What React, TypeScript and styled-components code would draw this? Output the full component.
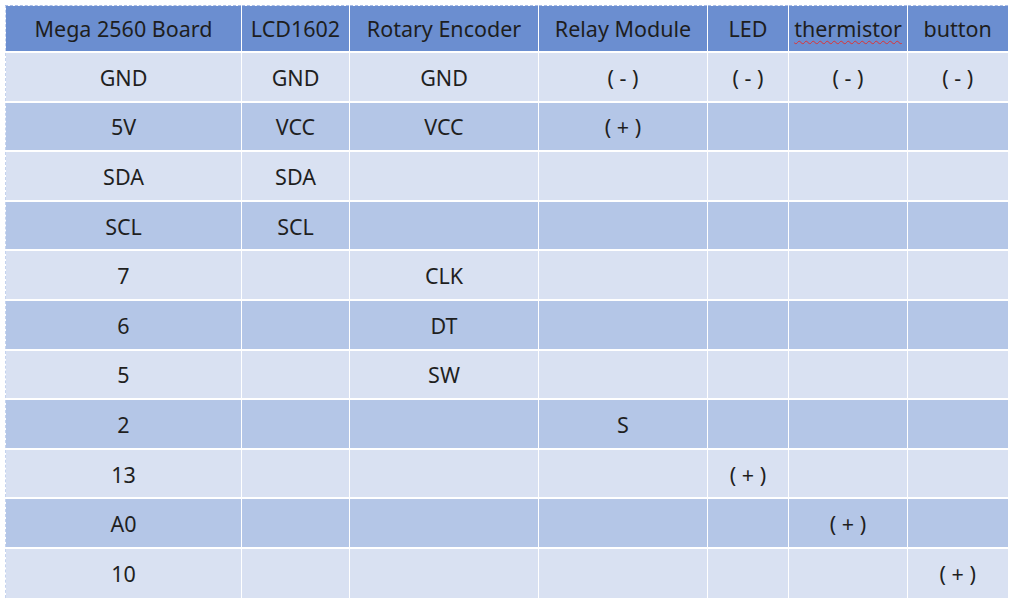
import styled, { createGlobalStyle } from 'styled-components';

const GlobalStyle = createGlobalStyle`
  html, body {
    margin: 0;
    padding: 0;
    background: #ffffff;
  }
`;

const columns = [
  { title: 'Mega 2560 Board', width: 236 },
  { title: 'LCD1602', width: 108 },
  { title: 'Rotary Encoder', width: 189 },
  { title: 'Relay Module', width: 169 },
  { title: 'LED', width: 81 },
  { title: 'thermistor', width: 119, misspelled: true },
  { title: 'button', width: 100 },
];

const rows: string[][] = [
  ['GND', 'GND', 'GND', '( - )', '( - )', '( - )', '( - )'],
  ['5V', 'VCC', 'VCC', '( + )', '', '', ''],
  ['SDA', 'SDA', '', '', '', '', ''],
  ['SCL', 'SCL', '', '', '', '', ''],
  ['7', '', 'CLK', '', '', '', ''],
  ['6', '', 'DT', '', '', '', ''],
  ['5', '', 'SW', '', '', '', ''],
  ['2', '', '', 'S', '', '', ''],
  ['13', '', '', '', '( + )', '', ''],
  ['A0', '', '', '', '', '( + )', ''],
  ['10', '', '', '', '', '', '( + )'],
];

const App = () => {
  return (
    <Page>
      <GlobalStyle />
      <Table>
        <colgroup>
          {columns.map((col) => (
            <col key={col.title} style={{ width: col.width }} />
          ))}
        </colgroup>
        <thead>
          <tr>
            {columns.map((col) => (
              <HeadCell key={col.title}>
                {col.misspelled ? <Misspelled>{col.title}</Misspelled> : col.title}
              </HeadCell>
            ))}
          </tr>
        </thead>
        <tbody>
          {rows.map((row, i) => (
            <Row key={i} $shaded={i % 2 === 1}>
              {row.map((cell, j) => (
                <Cell key={j}>{cell}</Cell>
              ))}
            </Row>
          ))}
        </tbody>
      </Table>
    </Page>
  );
};

export default App;

const Page = styled.div`
  padding: 5px 6px 0 5px;
  font-family: 'Noto Sans', 'Open Sans', 'Liberation Sans', sans-serif;
  color: #1f1f1f;
`;

const Table = styled.table`
  width: 1002px;
  table-layout: fixed;
  border-collapse: collapse;
  border-top: 1px dashed #a9bde6;
  border-left: 1px dashed #c5d3ee;
`;

const HeadCell = styled.th`
  height: 45px;
  padding: 0;
  background: #6b8ed0;
  border-right: 1px solid #ffffff;
  border-bottom: 2px solid #ffffff;
  font-weight: 400;
  font-size: 21.5px;
  line-height: 1.2;
  text-align: center;
  vertical-align: middle;
  color: #1e1e1e;
  white-space: nowrap;

  &:last-child {
    border-right: none;
  }
`;

const Misspelled = styled.span`
  text-decoration: underline wavy #e03030;
  text-decoration-thickness: 1px;
  text-underline-offset: 3px;
`;

const Row = styled.tr<{ $shaded: boolean }>`
  background: ${({ $shaded }) => ($shaded ? '#b4c6e7' : '#d9e1f2')};
`;

const Cell = styled.td`
  box-sizing: border-box;
  height: 49.6px;
  padding: 2px 0 0;
  border-right: 1px solid #ffffff;
  border-bottom: 2px solid #ffffff;
  font-size: 21.5px;
  line-height: 1.2;
  text-align: center;
  vertical-align: middle;
  white-space: nowrap;

  &:last-child {
    border-right: none;
  }

  tr:last-child > & {
    border-bottom: none;
  }
`;
